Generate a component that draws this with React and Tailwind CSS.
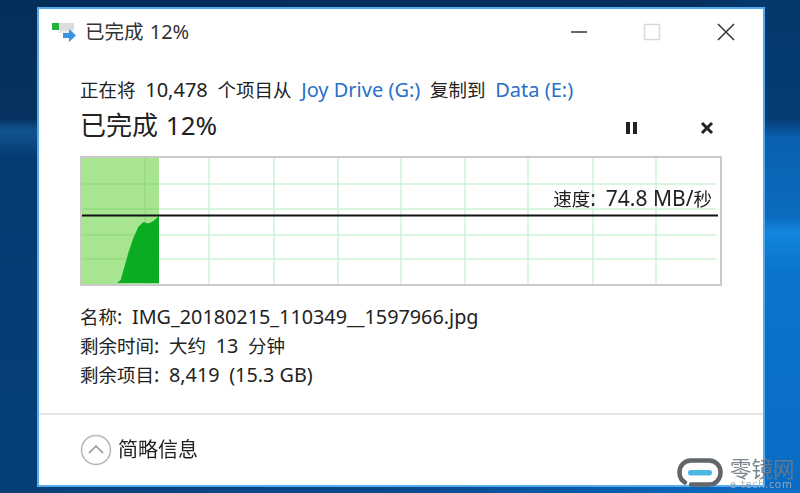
import React from 'react';

const FONT = "font-['Noto_Sans','Noto_Sans_CJK_SC',sans-serif]";
const V_LINES = [63, 127, 192, 256, 319, 383, 446, 511, 574];
const H_LINES = [26, 51, 77, 101];

// CJK runs in the reference are a little smaller than the latin around them
const Zh = ({ children }) => <span className="text-[18.5px]">{children}</span>;

const CopyIcon = () => (
  <svg width="26" height="22" viewBox="0 0 26 22" className="shrink-0">
    <rect x="1" y="2" width="7" height="7" fill="#22b33a" />
    <rect x="8" y="2" width="15" height="7" fill="#dcdcdc" />
    <rect x="8" y="9" width="14" height="3" fill="#e8e8e8" />
    <path d="M12 12h6V8l7 6.5-7 6.5v-4h-6z" fill="#3c93e0" />
  </svg>
);

const Graph = () => (
  <div className="relative h-[130px] border-2 border-[#c9c9c9] bg-white">
    <svg width="638" height="126" viewBox="0 0 638 126" className="block">
      <rect x="0" y="0" width="77" height="126" fill="#a8e590" />
      {V_LINES.map((x) => (
        <line key={x} x1={x} y1="0" x2={x} y2="126" stroke={x < 77 ? '#95db82' : '#cff2d4'} strokeWidth="1.5" />
      ))}
      {H_LINES.map((y) => (
        <React.Fragment key={y}>
          <line x1="0" y1={y} x2="77" y2={y} stroke="#95db82" strokeWidth="1.5" />
          <line x1="77" y1={y} x2="634" y2={y} stroke="#cff2d4" strokeWidth="1.5" />
        </React.Fragment>
      ))}
      <path
        d="M35 125 L38.7 122 L46.3 95 L51.3 80 L56.3 69 L61.3 64 L66.3 65.5 L71.3 63 L77 58 L77 125 Z"
        fill="#0aad22"
      />
      <line x1="0" y1="57.5" x2="636" y2="57.5" stroke="#111" strokeWidth="2" />
    </svg>
    <span className="absolute right-[8px] top-[27px] text-[21px] leading-[26px] text-[#222] [word-spacing:4.5px]">
      <Zh>速度</Zh>: <span className="[word-spacing:0px]">74.8 MB/</span>
      <Zh>秒</Zh>
    </span>
  </div>
);

const Watermark = () => (
  <div className="absolute left-[677px] top-[458px] flex items-start">
    <svg width="46" height="29" viewBox="0 0 46 29" className="shrink-0">
      <path
        d="M14 26.5 H32 C39 26.5 43.5 21 43.5 14.5 C43.5 8 39 2.5 32 2.5 H14 C7 2.5 2.5 8 2.5 14.5 C2.5 19 4.5 22.5 8 24.5"
        fill="none"
        stroke="#62666a"
        strokeWidth="4.5"
        strokeLinecap="round"
      />
      <rect x="11" y="12" width="24" height="5.5" rx="2.75" fill="#4bb8e4" />
    </svg>
    <div className="ml-[7px] flex flex-col whitespace-nowrap text-[#6f7a84] opacity-90">
      <span className="text-[21.5px] leading-[20px] font-['Noto_Sans_CJK_SC',sans-serif]">零镜网</span>
      <span className="mt-[2px] text-[10.5px] leading-[9px] tracking-[0.8px] text-[#a4acb2]">e-tech.com</span>
    </div>
  </div>
);

export default function App() {
  return (
    <div className={`${FONT} relative flex h-[493px] w-[800px] overflow-hidden blur-[0.35px]`}>
      <div className="w-[37px] shrink-0 bg-[linear-gradient(180deg,#042e5a_0%,#053260_24%,#115491_26.5%,#053a72_32%,#063f78_100%)]" />

      <div className="flex w-[728px] shrink-0 flex-col">
        <div className="h-[7px] bg-[linear-gradient(90deg,#042e5a,#052f5c_90%,#053a70)]" />
        <div className="flex h-[480px] flex-col border-2 border-[#56abee] bg-white">
          {/* title bar */}
          <div className="flex h-[46px] items-center">
            <div className="ml-[12px] mr-[8px]">
              <CopyIcon />
            </div>
            <span className="text-[20px] leading-[24px] text-[#333] [word-spacing:1px]">
              <span className="text-[19.5px]">已完成</span> 12%
            </span>
            <div className="ml-auto flex items-center">
              <svg width="18" height="18" viewBox="0 0 18 18" className="mr-[55px]">
                <line x1="1" y1="9" x2="17" y2="9" stroke="#333" strokeWidth="1.5" />
              </svg>
              <svg width="18" height="18" viewBox="0 0 18 18" className="mr-[56px]">
                <rect x="1.5" y="1.5" width="15" height="15" fill="none" stroke="#d8d8d8" strokeWidth="1.5" />
              </svg>
              <svg width="18" height="18" viewBox="0 0 18 18" className="mr-[28px]">
                <path d="M1 1 L17 17 M17 1 L1 17" stroke="#333" strokeWidth="1.5" />
              </svg>
            </div>
          </div>

          {/* content */}
          <div className="flex flex-1 flex-col px-[41px] pt-[22px]">
            <div className="text-[20px] leading-[26px] text-[#222] [word-spacing:4.5px]">
              <Zh>正在将</Zh> 10,478 <Zh>个项目从</Zh>{' '}
              <span className="text-[#2a70c8] [word-spacing:0px]">Joy Drive (G:)</span> <Zh>复制到</Zh>{' '}
              <span className="text-[#2a70c8] [word-spacing:0px]">Data (E:)</span>
            </div>
            <div className="mt-[5px] flex h-[34px] items-center">
              <span className="text-[26px] leading-[34px] text-[#222] [word-spacing:1px]">已完成 12%</span>
              <div className="ml-auto flex items-center pt-[5px]">
                <svg width="14" height="14" viewBox="0 0 14 14" className="mr-[61px]">
                  <rect x="1" y="1" width="4" height="12" fill="#222" />
                  <rect x="8" y="1" width="4" height="12" fill="#222" />
                </svg>
                <svg width="14" height="14" viewBox="0 0 14 14" className="mr-[8px]">
                  <path d="M2 2 L12 12 M12 2 L2 12" stroke="#222" strokeWidth="3" />
                </svg>
              </div>
            </div>
            <div className="mt-[14px]">
              <Graph />
            </div>
            <div className="mt-[16px] text-[19.8px] leading-[29px] text-[#222] [word-spacing:4.5px]">
              <div>
                <Zh>名称</Zh>: IMG_20180215_110349__1597966.jpg
              </div>
              <div>
                <Zh>剩余时间</Zh>: <Zh>大约</Zh> 13 <Zh>分钟</Zh>
              </div>
              <div>
                <Zh>剩余项目</Zh>: 8,419 <span className="[word-spacing:0px]">(15.3 GB)</span>
              </div>
            </div>
          </div>

          {/* footer */}
          <div className="flex h-[72px] items-center border-t-2 border-[#e6e6e6] pl-[41px]">
            <svg width="32" height="32" viewBox="0 0 32 32" className="mr-[6px] shrink-0">
              <circle cx="16" cy="16" r="14.5" fill="none" stroke="#b5b5b5" strokeWidth="1.5" />
              <path d="M9 19 L16 12 L23 19" fill="none" stroke="#8f8f8f" strokeWidth="1.5" />
            </svg>
            <span className="text-[20px] text-[#222]">简略信息</span>
          </div>
        </div>
        <div className="h-[6px] bg-[linear-gradient(90deg,#06407a,#06488c_50%,#0a6cc4)]" />
      </div>

      <div className="flex-1 bg-[linear-gradient(180deg,#05386c_0%,#053c74_24%,#0a60b0_28%,#0a6cc0_44%,#1285dc_47%,#0a74cc_55%,#0a6cc4_100%)]" />

      <Watermark />
    </div>
  );
}
